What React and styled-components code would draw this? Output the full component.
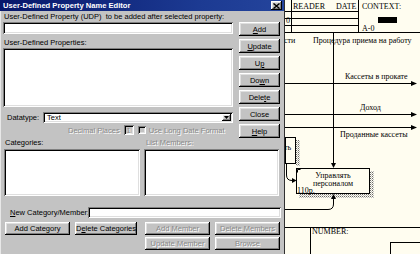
import React from "react";
import styled, { createGlobalStyle, css } from "styled-components";

const Global = createGlobalStyle`
  html, body { margin: 0; padding: 0; overflow: hidden; }
  body { background: #c3c3c3; font-family: "Liberation Sans", Arial, sans-serif; }
  * { box-sizing: border-box; }
`;

const raised = css`
  box-shadow: inset -1px -1px #000, inset 1px 1px #fff, inset -2px -2px #808080, inset 2px 2px #dfdfdf;
`;
const sunken = css`
  box-shadow: inset 1px 1px #808080, inset -1px -1px #fff, inset 2px 2px #000, inset -2px -2px #dfdfdf;
`;

const Screen = styled.div`
  display: flex;
  width: 420px;
  height: 254px;
  overflow: hidden;
`;

const Dialog = styled.div`
  width: 285px;
  flex: none;
  height: 254px;
  background: #c3c3c3;
  box-shadow: inset -1px 0 #303030, inset 1px 0 #e8e8e8;
  display: flex;
  flex-direction: column;
  font-size: 7.5px;
  line-height: 9px;
  color: #000;
`;

const TitleBar = styled.div`
  height: 11px;
  margin-right: 1px;
  background: linear-gradient(90deg, #07176a, #1c3a92 70%, #24449c);
  display: flex;
  align-items: center;
  justify-content: space-between;
  padding: 0 2px 0 3px;
  color: #fff;
  font-weight: bold;
  font-size: 7.6px;
`;

const CloseBox = styled.div`
  width: 11px;
  height: 9px;
  background: #c3c3c3;
  ${raised}
  display: flex;
  align-items: center;
  justify-content: center;
`;

const Body = styled.div`
  display: flex;
  flex-direction: column;
  padding: 1px 4px 0 3px;
`;

const Label = styled.div`
  height: 9px;
  line-height: 9px;
  white-space: nowrap;
  padding-left: ${p => p.$indent || 1}px;
  margin-top: ${p => p.$mt || 0}px;
  color: ${p => (p.$disabled ? "#8a8a8a" : "#000")};
  text-shadow: ${p => (p.$disabled ? "1px 1px 0 #fff" : "none")};
`;

const TopGrid = styled.div`
  display: grid;
  grid-template-columns: 230px 41px;
  column-gap: 6px;
  margin-top: 1px;
`;

const LeftCol = styled.div`
  display: flex;
  flex-direction: column;
`;

const ButtonCol = styled.div`
  display: flex;
  flex-direction: column;
  gap: 3px;
`;

const Field = styled.div`
  height: ${p => p.$h || 12}px;
  margin-top: ${p => p.$mt || 0}px;
  background: #fff;
  ${sunken}
  flex: ${p => (p.$grow ? 1 : "none")};
`;

const Select = styled.div`
  flex: 1;
  height: 11px;
  background: #fff;
  ${sunken}
  display: flex;
  align-items: center;
  justify-content: space-between;
  padding: 0 2px 0 4px;
`;

const DropBtn = styled.div`
  width: 9px;
  height: 7px;
  background: #c3c3c3;
  ${raised}
  display: flex;
  align-items: center;
  justify-content: center;
`;

const Row = styled.div`
  display: flex;
  align-items: center;
  margin-top: ${p => p.$mt || 0}px;
  height: ${p => p.$h || 11}px;
  padding-left: ${p => p.$pl || 0}px;
  gap: ${p => p.$gap || 0}px;
`;

const RowLabel = styled.div`
  width: ${p => p.$w}px;
  flex: none;
  padding-left: ${p => p.$pl || 0}px;
  white-space: nowrap;
`;

const Disabled = styled.span`
  color: #8a8a8a;
  text-shadow: 1px 1px 0 #fff;
  white-space: nowrap;
`;

const Spin = styled.div`
  width: 10px;
  height: 10px;
  background: #c3c3c3;
  ${sunken}
  display: flex;
  align-items: center;
  justify-content: center;
  margin-left: 4px;
`;

const Check = styled.div`
  width: 8px;
  height: 8px;
  background: #c3c3c3;
  ${sunken}
  margin: 0 3px 0 4px;
`;

const TwoCols = styled.div`
  display: grid;
  grid-template-columns: 136px 135px;
  column-gap: 4px;
  padding-left: 1px;
  margin-top: ${p => p.$mt || 0}px;
`;

const ButtonsArea = styled.div`
  display: flex;
  justify-content: space-between;
  align-items: flex-start;
  margin-top: 4px;
  padding: 0 1px 0 2px;
`;

const LeftButtons = styled.div`
  display: flex;
  gap: 5px;
`;

const RightButtons = styled.div`
  display: grid;
  grid-template-columns: 65px 65px;
  gap: 2px 5px;
`;

const Button = styled.div`
  display: flex;
  align-items: center;
  justify-content: center;
  width: ${p => (p.$w ? p.$w + "px" : "auto")};
  height: ${p => p.$h || 14}px;
  background: #c3c3c3;
  ${raised}
  white-space: nowrap;
  color: ${p => (p.$disabled ? "#8a8a8a" : "#000")};
  text-shadow: ${p => (p.$disabled ? "1px 1px 0 #fff" : "none")};
`;

const Diagram = styled.div`
  flex: 1;
  height: 254px;
  background: #fffdf0;
`;

const sideButtons = [
  ["", "A", "dd"],
  ["", "U", "pdate"],
  ["U", "p", ""],
  ["Do", "w", "n"],
  ["Dele", "t", "e"],
  ["Close", "", ""],
  ["", "H", "elp"],
];

function Mn({ parts }) {
  return (
    <span>
      {parts[0]}
      {parts[1] && <u>{parts[1]}</u>}
      {parts[2]}
    </span>
  );
}

function Canvas() {
  const serif = { fontFamily: '"Liberation Serif", "Times New Roman", serif', fontSize: 8 };
  return (
    <svg width="135" height="254" viewBox="285 0 135 254" style={{ display: "block" }}>
      <defs>
        <pattern id="dots" width="2" height="2" patternUnits="userSpaceOnUse">
          <rect width="1" height="1" fill="#6a6a6a" />
          <rect x="1" y="1" width="1" height="1" fill="#bdbdbd" />
        </pattern>
      </defs>
      <rect x="285" y="0" width="135" height="254" fill="#fffdf0" />
      <rect x="378" y="17" width="19" height="6" fill="#000" />
      <rect x="296" y="140" width="4" height="26" fill="url(#dots)" />
      <rect x="370" y="171" width="4" height="27" fill="url(#dots)" />
      <rect x="299" y="194" width="75" height="4" fill="url(#dots)" />
      <g stroke="#000" strokeWidth="1" shapeRendering="crispEdges" fill="none">
        <line x1="291.5" y1="0" x2="291.5" y2="32" />
        <line x1="358.5" y1="0" x2="358.5" y2="32" />
        <line x1="285" y1="11.5" x2="358" y2="11.5" />
        <line x1="285" y1="18.5" x2="358" y2="18.5" />
        <line x1="285" y1="25.5" x2="358" y2="25.5" />
        <line x1="285" y1="32.5" x2="420" y2="32.5" />
        <line x1="333.5" y1="33" x2="333.5" y2="165" />
        <line x1="285" y1="83.5" x2="411" y2="83.5" />
        <line x1="285" y1="114.5" x2="411" y2="114.5" />
        <line x1="285" y1="127.5" x2="411" y2="127.5" />
        <rect x="285.5" y="137.5" width="10" height="26" fill="#fffdf0" />
        <rect x="296.5" y="168.5" width="73" height="25" fill="#fffdf0" />
        <line x1="285" y1="227.5" x2="420" y2="227.5" />
        <line x1="310.5" y1="228" x2="310.5" y2="254" />
        <line x1="390.5" y1="242" x2="390.5" y2="254" />
        <line x1="390" y1="242.5" x2="420" y2="242.5" />
      </g>
      <g stroke="#000" strokeWidth="1" fill="none">
        <path d="M286.5 164 V175 Q286.5 180.5 292 180.5 H293" />
        <path d="M333.5 197 V204 Q333.5 209.5 328 209.5 H285" />
        <path d="M297.5 169.5 h3 M297.5 169.5 v3" />
      </g>
      <g fill="#000">
        <path d="M411 81 L417 83.5 L411 86 Z" />
        <path d="M411 112 L417 114.5 L411 117 Z" />
        <path d="M411 125 L417 127.5 L411 130 Z" />
        <path d="M331 163 L333.5 168 L336 163 Z" />
        <path d="M292 178 L296.5 180.5 L292 183 Z" />
        <path d="M331 199 L333.5 194 L336 199 Z" />
      </g>
      <g style={serif} fill="#000">
        <text x="293" y="9">READER</text>
        <text x="336" y="9">DATE</text>
        <text x="362" y="9">CONTEXT:</text>
        <text x="286" y="23">0</text>
        <text x="362" y="31">A-0</text>
        <text x="284" y="43">сти</text>
        <text x="313" y="43">Процедура приема на работу</text>
        <text x="345" y="79">Кассеты в прокате</text>
        <text x="360" y="110">Доход</text>
        <text x="340" y="137">Проданные кассеты</text>
        <text x="284" y="150">ть</text>
        <text x="333" y="178" textAnchor="middle">Управлять</text>
        <text x="333" y="186" textAnchor="middle">персоналом</text>
        <text x="297" y="193">110р.</text>
        <text x="312" y="234">NUMBER:</text>
      </g>
    </svg>
  );
}

export default function App() {
  return (
    <>
      <Global />
      <Screen>
        <Dialog>
          <TitleBar>
            <span>User-Defined Property Name Editor</span>
            <CloseBox>
              <svg width="7" height="6" viewBox="0 0 7 6">
                <path d="M0.5 0.5 L6.5 5.5 M6.5 0.5 L0.5 5.5" stroke="#000" strokeWidth="1.4" />
              </svg>
            </CloseBox>
          </TitleBar>
          <Body>
            <Label>User-Defined Property (UDP)&nbsp; to be added after selected property:</Label>
            <TopGrid>
              <LeftCol>
                <Field $h={12} />
                <Label $mt={4}>User-Defined Properties:</Label>
                <Field $h={59} $mt={1} />
                <Row $mt={5} $h={11} $pl={4}>
                  <RowLabel $w={36}>Datatype:</RowLabel>
                  <Select>
                    <span>Text</span>
                    <DropBtn>
                      <svg width="5" height="3" viewBox="0 0 5 3">
                        <path d="M0 0 H5 L2.5 3 Z" fill="#000" />
                      </svg>
                    </DropBtn>
                  </Select>
                </Row>
                <Row $mt={2} $h={10} $pl={65}>
                  <Disabled>Decimal Places</Disabled>
                  <Spin>
                    <Disabled>1</Disabled>
                  </Spin>
                  <Check />
                  <Disabled>Use Long Date Format</Disabled>
                </Row>
              </LeftCol>
              <ButtonCol>
                {sideButtons.map((b, i) => (
                  <Button key={i} $h={14}>
                    <Mn parts={b} />
                  </Button>
                ))}
              </ButtonCol>
            </TopGrid>
            <TwoCols>
              <Label $indent={1}>Categories:</Label>
              <Label $indent={2} $disabled>List Members:</Label>
            </TwoCols>
            <TwoCols $mt={2}>
              <Field $h={47} />
              <Field $h={47} />
            </TwoCols>
            <Row $mt={11} $h={11}>
              <RowLabel $w={85} $pl={7}>
                <u>N</u>ew Category/Member:
              </RowLabel>
              <Field $h={11} $grow />
            </Row>
            <ButtonsArea>
              <LeftButtons>
                <Button $w={65} $h={13}>Add Category</Button>
                <Button $w={62} $h={13}>
                  D<u>e</u>lete Categories
                </Button>
              </LeftButtons>
              <RightButtons>
                <Button $h={13} $disabled>Add Member</Button>
                <Button $h={13} $disabled>Delete Members</Button>
                <Button $h={13} $disabled>Update Member</Button>
                <Button $h={13} $disabled>Browse</Button>
              </RightButtons>
            </ButtonsArea>
          </Body>
        </Dialog>
        <Diagram>
          <Canvas />
        </Diagram>
      </Screen>
    </>
  );
}
